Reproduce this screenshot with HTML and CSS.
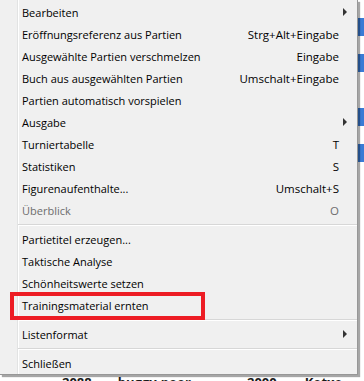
FILE: index.html
```html
<!DOCTYPE html>
<html lang="de">
<head>
   <meta charset="UTF-8">
   <title>Partien Menü</title>
   <link rel="stylesheet" href="styles.css">
</head>
<body>
   <div class="app">
      <!-- Partienliste im Hintergrund -->
      <div class="list">
         <div class="row"></div>
         <div class="row sel"></div>
         <div class="row"></div>
         <div class="row sel"></div>
         <div class="row"></div>
         <div class="row"></div>
         <div class="row sel"></div>
         <div class="row"></div>
         <div class="row sel"></div>
         <div class="row"></div>
         <div class="row"></div>
         <div class="row"></div>
         <div class="row"></div>
         <div class="row"></div>
         <div class="row"></div>
         <div class="row"></div>
         <div class="row"></div>
         <div class="row"></div>
         <div class="row"></div>
         <div class="row"></div>
         <div class="row game">
            <span class="c-elo">2088</span>
            <span class="c-name">buggy-poor</span>
            <span class="c-elo2">2000</span>
            <span class="c-name2">Kotxe</span>
            <span class="c-res">5</span>
         </div>
      </div>

      <!-- Kontextmenü -->
      <div class="menu">
         <div class="item"><span class="label">Bearbeiten</span><span class="arrow"></span></div>
         <div class="item"><span class="label">Eröffnungsreferenz aus Partien</span><span class="key">Strg+Alt+Eingabe</span></div>
         <div class="item"><span class="label">Ausgewählte Partien verschmelzen</span><span class="key">Eingabe</span></div>
         <div class="item"><span class="label">Buch aus ausgewählten Partien</span><span class="key">Umschalt+Eingabe</span></div>
         <div class="item"><span class="label">Partien automatisch vorspielen</span></div>
         <div class="item"><span class="label">Ausgabe</span><span class="arrow"></span></div>
         <div class="item"><span class="label">Turniertabelle</span><span class="key">T</span></div>
         <div class="item"><span class="label">Statistiken</span><span class="key">S</span></div>
         <div class="item"><span class="label">Figurenaufenthalte...</span><span class="key">Umschalt+S</span></div>
         <div class="item disabled"><span class="label">Überblick</span><span class="key">O</span></div>
         <div class="sep"></div>
         <div class="item"><span class="label">Partietitel erzeugen...</span></div>
         <div class="item"><span class="label">Taktische Analyse</span></div>
         <div class="item"><span class="label">Schönheitswerte setzen</span></div>
         <div class="item"><span class="label">Trainingsmaterial ernten</span><span class="mark"></span></div>
         <div class="sep"></div>
         <div class="item"><span class="label">Listenformat</span><span class="arrow"></span></div>
         <div class="sep"></div>
         <div class="item"><span class="label">Schließen</span></div>
      </div>
   </div>
</body>
</html>
```

FILE: styles.css
```css
body {
   margin: 0;
   padding: 0;
   font-family: "Open Sans", "Noto Sans", sans-serif;
   font-size: 11px;
   color: #000;
}

.app {
   position: relative;
   width: 364px;
   height: 381px;
   overflow: hidden;
   background-color: #fff;
}

.list {
   display: flex;
   flex-direction: column;
}

.row {
   height: 18px;
   flex: 0 0 18px;
}

.row.sel {
   background-color: #3a7bd5;
}

.row.game {
   display: flex;
   align-items: flex-start;
   margin-top: 16px;
   font-size: 13px;
   font-weight: bold;
   color: #1a1a1a;
   line-height: 13px;
   white-space: nowrap;
}

.c-elo { margin-left: 62px; }
.c-name { margin-left: 26px; }
.c-elo2 { margin-left: 56px; }
.c-name2 { margin-left: 28px; }
.c-res { margin-left: 26px; }

/* Popup über der Liste */
.menu {
   position: absolute;
   top: 0;
   left: 0;
   width: 357px;
   padding-top: 1px;
   background-color: #f0f0f0;
   background-image: linear-gradient(to right, transparent 17px, #e2e3e3 17px, #e2e3e3 18px, #fff 18px, #fff 19px, transparent 19px);
   border-right: 1px solid #979797;
   border-bottom: 1px solid #979797;
   box-shadow: 2px 2px 1px rgba(0, 0, 0, 0.35);
}

.item {
   position: relative;
   display: flex;
   align-items: center;
   height: 22px;
   padding: 0 10px 0 22px;
}

.item .label {
   flex: 1;
   white-space: nowrap;
}

.item .key {
   margin-right: 8px;
   font-size: 11.5px;
   white-space: nowrap;
}

.item .arrow {
   width: 0;
   height: 0;
   border-left: 4px solid #333;
   border-top: 4px solid transparent;
   border-bottom: 4px solid transparent;
}

.item.disabled {
   color: #6d6d6d;
}

.sep {
   height: 7px;
   display: flex;
   align-items: center;
   padding-left: 18px;
}

.sep::before {
   content: "";
   flex: 1;
   height: 0;
   border-top: 1px solid #d7d7d7;
   border-bottom: 1px solid #fff;
}

/* rote Markierung */
.mark {
   position: absolute;
   left: 10px;
   top: -2px;
   width: 195px;
   height: 28px;
   box-sizing: border-box;
   border: 4px solid #ed1c24;
}
```
